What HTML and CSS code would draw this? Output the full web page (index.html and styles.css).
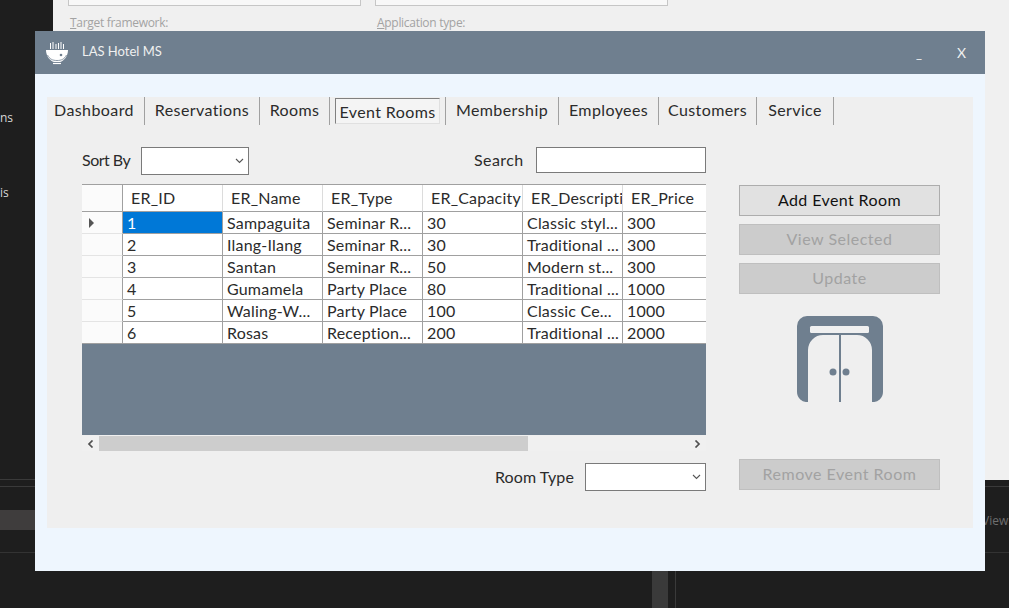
FILE: index.html
```html
<!DOCTYPE html>
<html lang="en">
<head>
  <meta charset="UTF-8" />
  <title>LAS Hotel MS</title>
  <link rel="stylesheet" href="styles.css">
</head>
<body>
  <!-- stuff behind the app window -->
  <div class="side-text side-ns">ns</div>
  <div class="side-text side-is">is</div>
  <div class="dock-left"><div class="dock-item"></div></div>
  <div class="dock-right"><span class="dock-view">View</span></div>
  <div class="splitter"></div>
  <div class="splitter-line"></div>

  <div class="bg-dialog">
    <div class="bg-fields">
      <div class="bg-field">
        <div class="bg-box"></div>
        <div class="bg-label"><u>T</u>arget framework:</div>
      </div>
      <div class="bg-field">
        <div class="bg-box"></div>
        <div class="bg-label"><u>A</u>pplication type:</div>
      </div>
    </div>
  </div>

  <div class="window">
    <div class="titlebar">
      <svg class="app-icon" viewBox="0 0 24 24" width="24" height="24">
        <path d="M5.500 2v6M8 1v7M11 3v5M13.500 2v6M16 1v7M18.500 3v5" stroke="#fff" stroke-width="1" fill="none"/>
        <path d="M1 9h22c0 6-4 11-8 12H9C5 20 1 15 1 9z" fill="#fff"/>
        <path d="M2.500 14c2 4 5 5.500 9.500 5.500s7.500-1.500 9.500-5.500" stroke="#6f7f8f" stroke-width=".8" fill="none"/>
        <path d="M8 22.500h8" stroke="#fff" stroke-width="1.200"/>
        <circle cx="16" cy="14" r="1.300" fill="#6f7f8f"/>
      </svg>
      <span class="app-title">LAS Hotel MS</span>
      <span class="win-min">_</span>
      <span class="win-close">X</span>
    </div>

    <div class="window-body">
      <div class="panel">
        <div class="tabs">
          <div class="tab tab-first">Dashboard</div>
          <div class="tab">Reservations</div>
          <div class="tab">Rooms</div>
          <div class="tab"><span class="tab-active">Event Rooms</span></div>
          <div class="tab">Membership</div>
          <div class="tab">Employees</div>
          <div class="tab">Customers</div>
          <div class="tab">Service</div>
        </div>

        <div class="content">
          <div class="left">
            <div class="toolbar">
              <label class="lbl-sort">Sort By</label>
              <div class="combo combo-sort">
                <svg viewBox="0 0 9 6" width="9" height="6"><path d="M1 1l3.500 3.500L8 1" fill="none" stroke="#555" stroke-width="1.100"/></svg>
              </div>
              <label class="lbl-search">Search</label>
              <input class="search" type="text">
            </div>

            <div class="grid">
              <table>
                <thead>
                  <tr>
                    <th class="rowhead"></th>
                    <th>ER_ID</th>
                    <th>ER_Name</th>
                    <th>ER_Type</th>
                    <th>ER_Capacity</th>
                    <th>ER_Description</th>
                    <th>ER_Price</th>
                  </tr>
                </thead>
                <tbody>
                  <tr>
                    <td class="rowhead"><span class="cursor"></span></td>
                    <td class="selected">1</td><td>Sampaguita</td><td>Seminar R...</td><td>30</td><td>Classic styl...</td><td>300</td>
                  </tr>
                  <tr>
                    <td class="rowhead"></td>
                    <td>2</td><td>Ilang-Ilang</td><td>Seminar R...</td><td>30</td><td>Traditional ...</td><td>300</td>
                  </tr>
                  <tr>
                    <td class="rowhead"></td>
                    <td>3</td><td>Santan</td><td>Seminar R...</td><td>50</td><td>Modern st...</td><td>300</td>
                  </tr>
                  <tr>
                    <td class="rowhead"></td>
                    <td>4</td><td>Gumamela</td><td>Party Place</td><td>80</td><td>Traditional ...</td><td>1000</td>
                  </tr>
                  <tr>
                    <td class="rowhead"></td>
                    <td>5</td><td>Waling-W...</td><td>Party Place</td><td>100</td><td>Classic Ce...</td><td>1000</td>
                  </tr>
                  <tr>
                    <td class="rowhead"></td>
                    <td>6</td><td>Rosas</td><td>Reception...</td><td>200</td><td>Traditional ...</td><td>2000</td>
                  </tr>
                </tbody>
              </table>
            </div>

            <div class="hscroll">
              <svg viewBox="0 0 7 8" width="7" height="8"><path d="M5.500 .5L2 4l3.500 3.500" fill="none" stroke="#505050" stroke-width="1.700"/></svg>
              <div class="hscroll-track"><div class="hscroll-thumb"></div></div>
              <svg viewBox="0 0 7 8" width="7" height="8"><path d="M1.500 .5L5 4 1.500 7.500" fill="none" stroke="#505050" stroke-width="1.700"/></svg>
            </div>

            <div class="room-type">
              <label>Room Type</label>
              <div class="combo combo-type">
                <svg viewBox="0 0 9 6" width="9" height="6"><path d="M1 1l3.500 3.500L8 1" fill="none" stroke="#555" stroke-width="1.100"/></svg>
              </div>
            </div>
          </div>

          <div class="right">
            <button class="btn">Add Event Room</button>
            <button class="btn" disabled>View Selected</button>
            <button class="btn" disabled>Update</button>
            <svg class="door" viewBox="0 0 86 86" width="86" height="86">
              <path d="M10 0h66a10 10 0 0 1 10 10v66a10 10 0 0 1-11 10V34a15 15 0 0 0-15-15H26a15 15 0 0 0-15 15v52A10 10 0 0 1 0 76V10A10 10 0 0 1 10 0z" fill="#6f7f8f"/>
              <rect x="13" y="10" width="59" height="7" rx="1.500" fill="#f0f0f0"/>
              <rect x="42" y="19" width="2" height="67" fill="#6f7f8f"/>
              <circle cx="36" cy="56" r="3.500" fill="#6f7f8f"/>
              <circle cx="49" cy="56" r="3.500" fill="#6f7f8f"/>
            </svg>
            <button class="btn btn-remove" disabled>Remove Event Room</button>
          </div>
        </div>
      </div>
    </div>
  </div>
</body>
</html>
```

FILE: styles.css
```css
html, body {
  margin: 0;
  height: 100%;
}
body {
  width: 1009px;
  height: 608px;
  overflow: hidden;
  position: relative;
  background-color: #1e1e1e;
  font-family: "Lato", "Liberation Sans", sans-serif;
  font-size: 16px;
  color: #2b2b2b;
}

/* behind the window */
.bg-dialog {
  position: absolute;
  left: 53px;
  top: 0;
  right: 0;
  height: 480px;
  background-color: #f0f0f0;
}
.bg-fields {
  display: flex;
  gap: 14px;
  padding-left: 15px;
}
.bg-field {
  width: 293px;
}
.bg-box {
  height: 5px;
  background-color: #f8f8f8;
  border: 1px solid #c6c6c6;
  border-top: none;
}
.bg-label {
  margin-top: 9px;
  padding-left: 2px;
  font-family: "Open Sans", sans-serif;
  font-size: 12px;
  line-height: 16px;
  letter-spacing: -0.3px;
  color: #a3a3a3;
}
.side-text {
  position: absolute;
  left: 0;
  font-family: "Open Sans", sans-serif;
  font-size: 12px;
  line-height: 16px;
  color: #d8d8d8;
}
.side-ns { top: 110px; }
.side-is { top: 185px; }
.dock-left, .dock-right {
  position: absolute;
  top: 479px;
  height: 74px;
  box-sizing: border-box;
  border-top: 1px solid #3a3a3a;
  border-bottom: 1px solid #333;
}
.dock-left {
  left: 0;
  width: 35px;
}
.dock-item {
  margin-top: 30px;
  height: 20px;
  background-color: #3f3d3d;
}
.dock-left::before, .dock-right::before {
  content: "";
  position: absolute;
  top: 6px;
  left: 0;
  right: 0;
  height: 1px;
  background-color: #3a3a3a;
}
.dock-right {
  left: 985px;
  right: 0;
  overflow: hidden;
}
.dock-view {
  position: absolute;
  left: -3px;
  top: 33px;
  font-family: "Open Sans", sans-serif;
  font-size: 12px;
  line-height: 16px;
  color: #6e6e6e;
}
.splitter {
  position: absolute;
  left: 652px;
  top: 571px;
  width: 16px;
  bottom: 0;
  background-color: #3a3a3a;
}
.splitter-line {
  position: absolute;
  left: 675px;
  top: 571px;
  width: 1px;
  bottom: 0;
  background-color: #3a3a3a;
}

/* app window */
.window {
  position: absolute;
  left: 35px;
  top: 31px;
  width: 950px;
  height: 540px;
  background-color: #eef6fe;
}
.titlebar {
  height: 43px;
  background-color: #6f7f8f;
  color: #f0f0f0;
  display: flex;
  align-items: center;
  padding-left: 10px;
  font-size: 13px;
}
.app-title {
  margin-left: 13px;
  padding-bottom: 3px;
}
.win-min {
  margin-left: auto;
}
.win-close {
  margin-left: 35px;
  margin-right: 19px;
  font-size: 14px;
}
.window-body {
  padding: 23px 12px 0;
}
.panel {
  height: 431px;
  background-color: #efefef;
}

/* tabs */
.tabs {
  display: grid;
  grid-template-columns: 98px 115px 70px 116px 113px 100px 98px 77px;
  height: 28px;
}
.tab {
  box-sizing: border-box;
  border-right: 1px solid #a0a0a0;
  text-align: center;
  line-height: 26px;
  letter-spacing: 0.4px;
  white-space: nowrap;
}
.tab-first {
  padding-right: 3px;
}
.tab-active {
  display: block;
  margin: 1px 5px 1px 5px;
  height: 26px;
  line-height: 25px;
  background-color: #f4f4f4;
  border-top: 1px solid #808080;
  border-left: 1px solid #808080;
  border-right: 1px solid #e0e0e0;
  border-bottom: 1px solid #e0e0e0;
  box-sizing: border-box;
}

/* main area */
.content {
  display: grid;
  grid-template-columns: 624px 201px;
  column-gap: 33px;
  padding: 22px 0 0 35px;
}
.toolbar {
  display: flex;
  align-items: flex-start;
  height: 28px;
  margin-bottom: 9px;
}
.toolbar label {
  line-height: 26px;
  letter-spacing: 0.4px;
}
.toolbar .lbl-sort {
  width: 59px;
  letter-spacing: -0.5px;
}
.lbl-search {
  margin-left: auto;
  width: 62px;
}
.combo {
  box-sizing: border-box;
  height: 28px;
  background-color: #fff;
  border: 1px solid #7a7a7a;
  display: flex;
  align-items: center;
  justify-content: flex-end;
  padding-right: 4px;
}
.combo-sort {
  width: 108px;
}
.search {
  box-sizing: border-box;
  width: 170px;
  height: 26px;
  margin: 0;
  border: 1px solid #7a7a7a;
  background-color: #fff;
}

/* data grid */
.grid {
  height: 251px;
  background-color: #6f7f8f;
  overflow: hidden;
  box-sizing: border-box;
  border-top: 1px solid #a0a0a0;
}
table {
  border-collapse: separate;
  border-spacing: 0;
  table-layout: fixed;
  width: 624px;
  background-color: #fff;
}
th, td {
  box-sizing: border-box;
  width: 100px;
  padding: 0;
  overflow: hidden;
  white-space: nowrap;
  font-weight: normal;
  text-align: left;
  letter-spacing: 0.2px;
  border-right: 1px solid #a0a0a0;
  border-bottom: 1px solid #a0a0a0;
}
th {
  height: 27px;
  padding: 0 0 2px 8px;
  border-right-color: #dcdcdc;
}
td {
  height: 22px;
  padding-left: 4px;
  line-height: 21px;
}
th.rowhead, td.rowhead {
  width: 41px;
  padding: 0;
  position: relative;
  background-color: #fbfbfb;
  border-right-color: #a0a0a0;
}
td.rowhead {
  border-bottom-color: #e4e4e4;
}
tr:last-child td.rowhead {
  border-bottom-color: #a0a0a0;
}
th:last-child, td:last-child {
  width: 83px;
  border-right: none;
}
td.selected {
  background-color: #0078d7;
  color: #fff;
}
.cursor {
  position: absolute;
  left: 7px;
  top: 6px;
  border-left: 5px solid #555;
  border-top: 5px solid transparent;
  border-bottom: 5px solid transparent;
}

.hscroll {
  margin-top: 1px;
  height: 15px;
  background-color: #f0f0f0;
  display: flex;
  align-items: center;
}
.hscroll svg {
  flex: none;
  margin: 0 5px;
}
.hscroll-track {
  flex: 1;
  height: 15px;
}
.hscroll-thumb {
  width: 429px;
  height: 15px;
  background-color: #cdcdcd;
}
.room-type {
  display: flex;
  justify-content: flex-end;
  align-items: center;
  margin-top: 12px;
  gap: 11px;
}
.room-type label {
  letter-spacing: 0.1px;
  padding-bottom: 2px;
}
.combo-type {
  width: 121px;
}

/* right column */
.right {
  display: flex;
  flex-direction: column;
  padding-top: 38px;
}
.btn {
  box-sizing: border-box;
  height: 31px;
  margin: 0 0 8px;
  padding: 0 0 2px;
  font: inherit;
  letter-spacing: 0.4px;
  color: #111;
  background-color: #e1e1e1;
  border: 1px solid #adadad;
}
.btn:disabled {
  color: #a2a2a2;
  background-color: #cccccc;
  border-color: #bfbfbf;
  letter-spacing: 0.5px;
}
.door {
  display: block;
  margin: 14px 0 0 58px;
}
.btn-remove {
  margin-top: 57px;
}
```
